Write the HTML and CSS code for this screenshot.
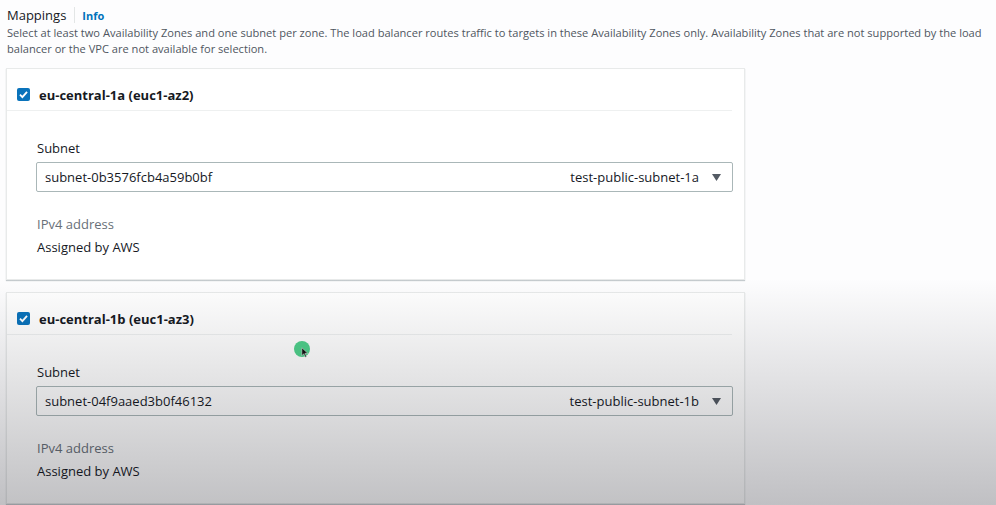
FILE: index.html
```html
<!DOCTYPE html>
<html>
<head>
<meta charset="utf-8">
<link rel="stylesheet" href="styles.css">
</head>
<body>
<div class="page">
  <div class="section-head">
    <h2 class="title">Mappings</h2>
    <span class="sep"></span>
    <a class="info">Info</a>
  </div>
  <p class="desc">Select at least two Availability Zones and one subnet per zone. The load balancer routes traffic to targets in these Availability Zones only. Availability Zones that are not supported by the load balancer or the VPC are not available for selection.</p>

  <div class="cards">
    <div class="card">
      <div class="card-head">
        <span class="cb"><svg viewBox="0 0 14 14" width="13" height="13"><path d="M3.2 7.2 L5.8 9.8 L10.8 4.2" fill="none" stroke="#fff" stroke-width="2"/></svg></span>
        <span class="az">eu-central-1a (euc1-az2)</span>
      </div>
      <div class="card-body">
        <div class="label">Subnet</div>
        <div class="select">
          <span class="sel-id">subnet-0b3576fcb4a59b0bf</span>
          <span class="sel-name">test-public-subnet-1a</span>
          <svg class="caret" viewBox="0 0 12 10" width="11" height="9"><path d="M1 1 H11 L6 9 Z" fill="#545b64"/></svg>
        </div>
        <div class="k">IPv4 address</div>
        <div class="v">Assigned by AWS</div>
      </div>
    </div>

    <div class="card">
      <div class="card-head">
        <span class="cb"><svg viewBox="0 0 14 14" width="13" height="13"><path d="M3.2 7.2 L5.8 9.8 L10.8 4.2" fill="none" stroke="#fff" stroke-width="2"/></svg></span>
        <span class="az">eu-central-1b (euc1-az3)</span>
      </div>
      <div class="card-body">
        <div class="label">Subnet</div>
        <div class="select">
          <span class="sel-id">subnet-04f9aaed3b0f46132</span>
          <span class="sel-name">test-public-subnet-1b</span>
          <svg class="caret" viewBox="0 0 12 10" width="11" height="9"><path d="M1 1 H11 L6 9 Z" fill="#545b64"/></svg>
        </div>
        <div class="k">IPv4 address</div>
        <div class="v">Assigned by AWS</div>
      </div>
    </div>
  </div>
</div>

<div class="cursor-dot"></div>
<svg class="cursor-arrow" viewBox="0 0 10 14" width="8" height="11"><path d="M1 1 L1 11 L3.5 8.5 L5.5 13 L7 12.3 L5 8 L8.5 8 Z" fill="#111" stroke="#fff" stroke-width="0.6"/></svg>
<div class="shade"></div>
</body>
</html>
```

FILE: styles.css
```css
* { box-sizing: border-box; }
html, body { margin: 0; padding: 0; }
body {
  width: 996px;
  height: 505px;
  overflow: hidden;
  background: #fdfdfe;
  font-family: "Open Sans", "Noto Sans", sans-serif;
  color: #16191f;
  position: relative;
}
.page {
  padding: 5px 0 0 6px;
}
.section-head {
  display: flex;
  align-items: center;
  height: 20px;
  padding-left: 1px;
}
.title {
  margin: 0;
  font-size: 13px;
  font-weight: 400;
  line-height: 20px;
  color: #16191f;
}
.sep {
  width: 1px;
  height: 16px;
  background: #e3e6e6;
  margin: 0 7px 0 8px;
}
.info {
  font-size: 11px;
  font-weight: 700;
  color: #0073bb;
}
.desc {
  margin: 0;
  padding-left: 1px;
  width: 990px;
  font-size: 11.1px;
  line-height: 16px;
  color: #4f565e;
}
.cards {
  margin-top: 11px;
  display: flex;
  flex-direction: column;
  gap: 12px;
  width: 739px;
}
.card {
  background: #fff;
  border: 1px solid #e8eaea;
  box-shadow: 0 1px 1px rgba(0, 28, 36, 0.22);
}
.card-head {
  display: flex;
  align-items: center;
  height: 42px;
  padding: 17px 0 7px 10px;
  margin-right: 12px;
  border-bottom: 1px solid #eef0f0;
}
.cb {
  width: 13px;
  height: 13px;
  border-radius: 2px;
  background: #0a73bb;
  display: flex;
  align-items: center;
  justify-content: center;
  margin-right: 9px;
}
.cb svg { display: block; }
.az {
  font-size: 13px;
  font-weight: 700;
  line-height: 18px;
}
.card-body {
  padding: 28px 11px 23px 29px;
}
.label {
  font-size: 13px;
  line-height: 18px;
  padding-left: 1px;
  margin-bottom: 5px;
}
.select {
  display: flex;
  align-items: center;
  height: 30px;
  border: 1px solid #aab7b8;
  border-radius: 2px;
  padding: 0 10px 0 8px;
  font-size: 13px;
  color: #16191f;
}
.sel-id { flex: 1; }
.sel-name { margin-right: 12px; }
.caret { display: block; }
.k {
  margin-top: 23px;
  font-size: 13px;
  line-height: 18px;
  color: #687078;
  padding-left: 1px;
}
.v {
  margin-top: 5px;
  font-size: 13px;
  line-height: 18px;
  padding-left: 1px;
}
.cursor-dot {
  position: absolute;
  left: 294px;
  top: 341px;
  width: 16px;
  height: 16px;
  border-radius: 50%;
  background: #4fd08b;
}
.cursor-arrow {
  position: absolute;
  left: 301px;
  top: 347px;
}
.shade {
  position: absolute;
  left: 0;
  top: 0;
  width: 996px;
  height: 505px;
  pointer-events: none;
  background: linear-gradient(to bottom, rgba(0,0,0,0) 0px, rgba(0,0,0,0) 278px, rgba(10,10,20,0.25) 505px);
}
```
